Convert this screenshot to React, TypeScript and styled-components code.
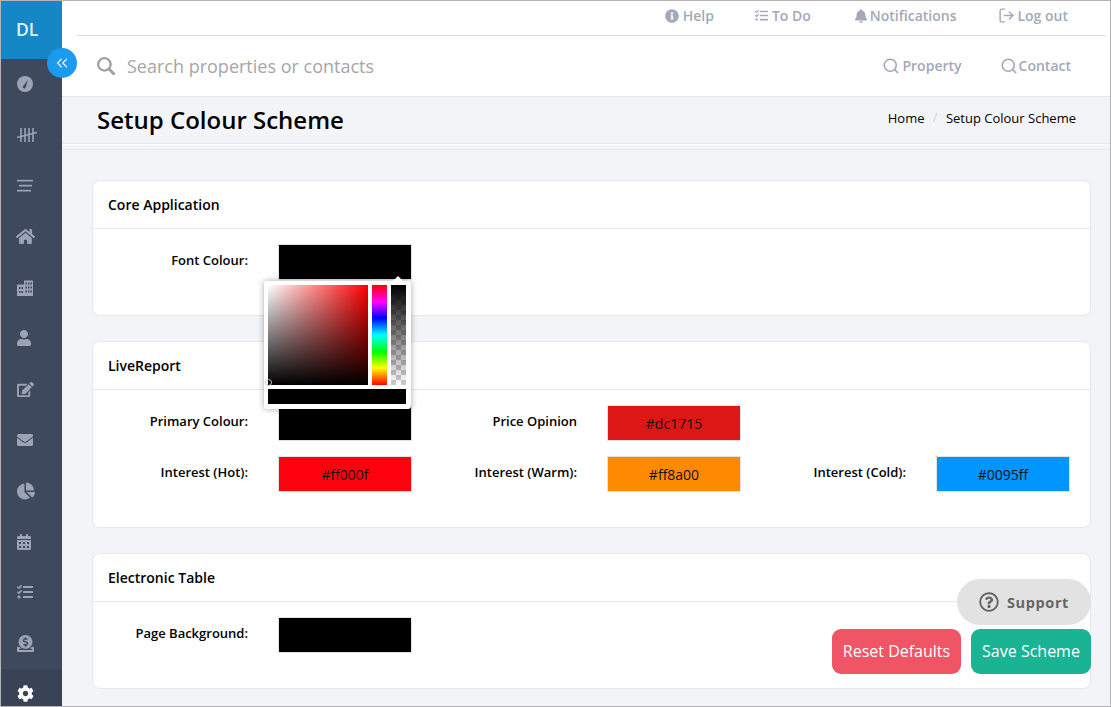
import React from "react";
import styled, { createGlobalStyle } from "styled-components";
import { FaHome, FaUser, FaEdit, FaEnvelope, FaChartPie, FaCalendarAlt, FaTasks, FaDonate, FaCog, FaInfoCircle, FaBell, FaRegQuestionCircle } from "react-icons/fa";
import { LogOut, Search, ChevronsLeft } from "lucide-react";

const Global = createGlobalStyle`
  html, body { margin: 0; padding: 0; background: #fff; }
  * { box-sizing: border-box; }
  body { font-family: "Open Sans", "Liberation Sans", sans-serif; color: #000; }
`;

const Frame = styled.div`
  position: relative; width: 1111px; height: 707px; border: 1px solid #b4b4b4;
  display: flex; overflow: hidden; background: #f3f4f8;
`;
const Sidebar = styled.aside`
  width: 61px; flex: none; background: #3f495e; display: flex; flex-direction: column;
  height: 705px; overflow: hidden;
`;
const Logo = styled.div`
  height: 58px; flex: none; background: #1587c7; color: #e3f0f8; font-size: 17.5px; font-weight: 600;
  display: flex; align-items: center; padding-left: 15px; padding-bottom: 3px;
`;
const NavItem = styled.div<{ $active?: boolean }>`
  height: 50.8px; flex: none; display: flex; align-items: center; padding-left: 16px;
  color: ${p => (p.$active ? "#fff" : "#9ba3b5")};
  ${p => p.$active && "background:#3a4355;"}
  svg { display: block; }
`;
const Toggle = styled.button`
  position: absolute; left: 46px; top: 47px; width: 30px; height: 30px; border-radius: 50%;
  background: #1a9bf0; border: 0; color: #e6f4fe; display: flex; align-items: center; justify-content: center; padding: 0;
`;
const Main = styled.main`
  flex: 1; min-width: 0; display: flex; flex-direction: column;
`;
const TopBar = styled.header`
  background: #fff; height: 96px; flex: none; border-bottom: 1px solid #e6e8ee; padding: 0 4px 0 15px;
`;
const TopRow = styled.nav`
  height: 35px; border-bottom: 1px solid #dedede; display: flex; justify-content: flex-end; gap: 42px; align-items: center;
  padding-right: 38px; padding-bottom: 5px;
`;
const TopLink = styled.span<{ $gap?: number; $after?: number }>`
  display: inline-flex; align-items: center; gap: ${p => p.$gap ?? 4}px; font-size: 14px; font-weight: 600; color: #a3a8ba; line-height: 20px;
  ${p => p.$after !== undefined && `margin-right: ${p.$after}px;`}
`;
const SearchRow = styled.div`
  height: 60px; display: flex; align-items: center; padding-left: 20px; padding-right: 35px; padding-bottom: 1px;
`;
const SearchText = styled.span`
  font-size: 18px; color: #a6a6a6; margin-left: 12px; flex: 1;
`;
const SearchTabs = styled.div`
  display: flex; gap: 38px;
`;
const TitleBand = styled.div`
  height: 47px; flex: none; display: flex; align-items: center; justify-content: space-between;
  padding: 0 34px 0 35px; border-bottom: 1px solid #e8e9ee; box-shadow: 0 1px 0 #fbfbfd;
`;
const Title = styled.h1`
  margin: 0; font-size: 24px; font-weight: 600; line-height: 32px;
`;
const Crumbs = styled.div`
  font-size: 13px; display: flex; gap: 8.5px; margin-top: -4px; color: #000;
  span { color: #cfd2da; font-size: 12px; }
`;
const Rule = styled.div`
  height: 1px; background: #e8e9ee; margin-top: 5px; flex: none;
`;
const Content = styled.div`
  padding: 30px 19px 0 30px; display: flex; flex-direction: column; gap: 25px;
`;
const Card = styled.section`
  background: #fff; border: 1px solid #e7e8ed; border-radius: 8px; flex: none;
`;
const CardHead = styled.h2`
  margin: 0; height: 48px; border-bottom: 1px solid #e7e8ed; padding: 0 15px; display: flex; align-items: center;
  font-size: 14px; font-weight: 600;
`;
const CardBody = styled.div`
  padding: 15px 15px 35px; display: grid; grid-template-columns: repeat(3, 304px); column-gap: 25px; row-gap: 15px;
`;
const Field = styled.div<{ $col?: number }>`
  display: flex; gap: 30px; height: 36px;
  ${p => p.$col && `grid-column: ${p.$col};`}
`;
const Label = styled.label`
  width: 140px; flex: none; text-align: right; font-size: 13px; font-weight: 600; line-height: 18px; padding-top: 7px;
`;
const SwatchWrap = styled.div`
  position: relative; width: 134px; height: 36px;
`;
const Swatch = styled.div<{ $bg: string }>`
  width: 134px; height: 36px; background: ${p => p.$bg}; border: 1px solid #e2e2e2;
  display: flex; align-items: center; justify-content: center; font-size: 14px; color: #111;
`;
const Picker = styled.div`
  position: absolute; left: -14px; top: 37px; width: 147px; height: 128px; background: #fff; border-radius: 3px;
  box-shadow: 0 0 6px rgba(0,0,0,.35); padding: 4px; z-index: 5;
  display: grid; grid-template-columns: 100px 15px 15px; grid-template-rows: 100px 15px; column-gap: 4px; row-gap: 4px;
  &::before {
    content: ""; position: absolute; right: 7px; top: -5px; border-left: 6px solid transparent; border-right: 6px solid transparent;
    border-bottom: 6px solid #fff;
  }
`;
const SatVal = styled.div`
  position: relative; background: linear-gradient(to top, #000, transparent), linear-gradient(to right, #fff, #f00);
  &::after {
    content: ""; position: absolute; left: -3px; bottom: -1px; width: 5px; height: 5px; border-radius: 50%;
    border: 1px solid #ccc;
  }
`;
const Hue = styled.div`
  background: linear-gradient(to bottom, #f00, #f0f 17%, #00f 33%, #0ff 50%, #0f0 67%, #ff0 83%, #f00);
`;
const Alpha = styled.div`
  background: linear-gradient(to bottom, #000, transparent),
    repeating-conic-gradient(#ccc 0 25%, #fff 0 50%) 0 0 / 10px 10px;
`;
const Preview = styled.div`
  grid-column: 1 / 4; background: #000;
`;
const Support = styled.div`
  position: absolute; left: 956px; top: 578px; width: 134px; height: 46px; border-radius: 23px; background: #e2e2e2;
  color: #666; display: flex; align-items: center; justify-content: center; gap: 8px; font-size: 14.5px; font-weight: 700; letter-spacing: .6px; z-index: 6;
`;
const Actions = styled.div`
  position: absolute; right: 19px; top: 628px; display: flex; gap: 10px; z-index: 6;
`;
const Btn = styled.button<{ $bg: string; $w: number }>`
  height: 45px; width: ${p => p.$w}px; border: 0; border-radius: 9px; background: ${p => p.$bg}; color: #fff;
  font: 400 16px "Open Sans", sans-serif; padding: 0 0 2px;
`;

const Gauge = () => (
  <svg width="16" height="16" viewBox="0 0 16 16"><circle cx="8" cy="8" r="8" fill="currentColor" /><path d="M5.6 11 L11 3.6 L8.4 12.3 A2.2 2.2 0 0 1 5.6 11Z" fill="#3f495e" /></svg>
);
const Tally = () => (
  <svg width="20" height="16" viewBox="0 0 20 16" style={{ marginLeft: -0.5 }}><g stroke="currentColor" strokeWidth="1.6" fill="none"><path d="M4 1v14M8 1v14M12 1v14M16 1v14M0 10.5 20 5.5" /></g></svg>
);
const Bars = () => (
  <svg width="16" height="14" viewBox="0 0 16 14"><g fill="currentColor"><rect x="0" y="0.8" width="16" height="1.7" /><rect x="2" y="5.8" width="13" height="1.7" /><rect x="0" y="10.8" width="14" height="1.7" /></g></svg>
);
const Tower = () => (
  <svg width="16" height="16" viewBox="0 0 16 16"><path fillRule="evenodd" fill="currentColor" d="M7 0.5h9V16H0V4.5h7ZM8.5 2.5v2H10v-2ZM11 2.5v2h1.5v-2ZM13.5 2.5v2H15v-2ZM8.5 6.5v2H10v-2ZM11 6.5v2h1.5v-2ZM13.5 6.5v2H15v-2ZM2 7v2h1.5V7ZM4.5 7v2H6V7ZM8.5 10.5v2H10v-2ZM11 10.5v2h1.5v-2ZM13.5 10.5v2H15v-2ZM2 11v2h1.5v-2ZM4.5 11v2H6v-2Z" /></svg>
);
const BigSearch = () => (
  <svg width="18" height="18" viewBox="0 0 18 18" fill="none" stroke="#a0a0a0"><circle cx="7.4" cy="7.4" r="6.2" strokeWidth="2.3" /><path d="M12 12l5 5" strokeWidth="3" strokeLinecap="round" /></svg>
);

export default function App() {
  return (
    <>
      <Global />
      <Frame>
        <Sidebar>
          <Logo>DL</Logo>
          <NavItem><Gauge /></NavItem>
          <NavItem><Tally /></NavItem>
          <NavItem><Bars /></NavItem>
          <NavItem><FaHome size={19} style={{ marginLeft: -1 }} /></NavItem>
          <NavItem><Tower /></NavItem>
          <NavItem><FaUser size={16} style={{ marginLeft: -1 }} /></NavItem>
          <NavItem><FaEdit size={17} /></NavItem>
          <NavItem><FaEnvelope size={16} /></NavItem>
          <NavItem><FaChartPie size={18} /></NavItem>
          <NavItem><FaCalendarAlt size={16} style={{ marginLeft: -1 }} /></NavItem>
          <NavItem><FaTasks size={16} /></NavItem>
          <NavItem><FaDonate size={17} /></NavItem>
          <NavItem $active><FaCog size={17} /></NavItem>
        </Sidebar>
        <Toggle><ChevronsLeft size={18} strokeWidth={1.8} /></Toggle>
        <Main>
          <TopBar>
            <TopRow>
              <TopLink $after={-1}><FaInfoCircle size={14} />Help</TopLink>
              <TopLink $after={1}><FaTasks size={13} />To Do</TopLink>
              <TopLink $gap={2}><FaBell size={14} />Notifications</TopLink>
              <TopLink $gap={2}><LogOut size={17} strokeWidth={2} />Log out</TopLink>
            </TopRow>
            <SearchRow>
              <BigSearch />
              <SearchText>Search properties or contacts</SearchText>
              <SearchTabs>
                <TopLink $gap={2}><Search size={18} strokeWidth={2.1} />Property</TopLink>
                <TopLink $gap={1}><Search size={18} strokeWidth={2.1} />Contact</TopLink>
              </SearchTabs>
            </SearchRow>
          </TopBar>
          <TitleBand>
            <Title>Setup Colour Scheme</Title>
            <Crumbs>Home <span>/</span> Setup Colour Scheme</Crumbs>
          </TitleBand>
          <Rule />
          <Content>
            <Card>
              <CardHead>Core Application</CardHead>
              <CardBody>
                <Field>
                  <Label>Font Colour:</Label>
                  <SwatchWrap>
                    <Swatch $bg="#000" />
                    <Picker>
                      <SatVal /><Hue /><Alpha /><Preview />
                    </Picker>
                  </SwatchWrap>
                </Field>
              </CardBody>
            </Card>
            <Card>
              <CardHead>LiveReport</CardHead>
              <CardBody>
                <Field>
                  <Label>Primary Colour:</Label>
                  <SwatchWrap><Swatch $bg="#000" /></SwatchWrap>
                </Field>
                <Field>
                  <Label>Price Opinion</Label>
                  <SwatchWrap><Swatch $bg="#dc1715">#dc1715</Swatch></SwatchWrap>
                </Field>
                <Field $col={1}>
                  <Label>Interest (Hot):</Label>
                  <SwatchWrap><Swatch $bg="#ff000f">#ff000f</Swatch></SwatchWrap>
                </Field>
                <Field>
                  <Label>Interest (Warm):</Label>
                  <SwatchWrap><Swatch $bg="#ff8a00">#ff8a00</Swatch></SwatchWrap>
                </Field>
                <Field>
                  <Label>Interest (Cold):</Label>
                  <SwatchWrap><Swatch $bg="#0095ff">#0095ff</Swatch></SwatchWrap>
                </Field>
              </CardBody>
            </Card>
            <Card>
              <CardHead>Electronic Table</CardHead>
              <CardBody>
                <Field>
                  <Label>Page Background:</Label>
                  <SwatchWrap><Swatch $bg="#000" /></SwatchWrap>
                </Field>
              </CardBody>
            </Card>
          </Content>
        </Main>
        <Support><FaRegQuestionCircle size={20} />Support</Support>
        <Actions>
          <Btn $bg="#ef5565" $w={129}>Reset Defaults</Btn>
          <Btn $bg="#1ab394" $w={120}>Save Scheme</Btn>
        </Actions>
      </Frame>
    </>
  );
}
